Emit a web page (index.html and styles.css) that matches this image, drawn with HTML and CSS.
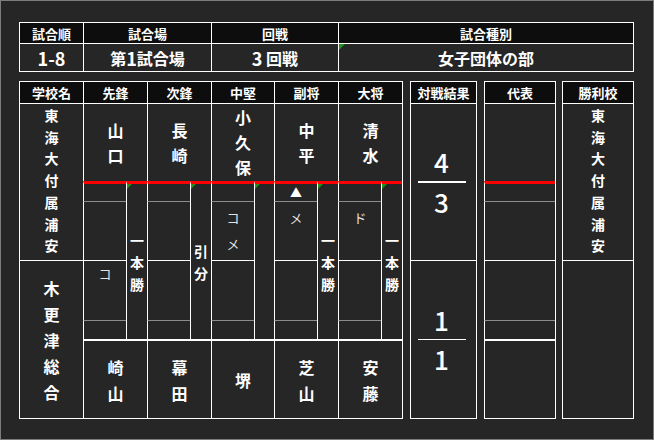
FILE: index.html
```html
<!DOCTYPE html>
<html lang="ja">
<head>
<meta charset="utf-8">
<title>試合結果</title>
<link rel="stylesheet" href="styles.css">
</head>
<body>
<div class="frame">
  <div class="info">
    <div class="cell hd">試合順</div>
    <div class="cell hd">試合場</div>
    <div class="cell hd">回戦</div>
    <div class="cell hd">試合種別</div>
    <div class="cell val"><span class="dg">1-8</span></div>
    <div class="cell val">第<span class="dg">1</span>試合場</div>
    <div class="cell val"><span class="dg">3</span>&nbsp;回戦</div>
    <div class="cell val flag">女子団体の部</div>
  </div>

  <div class="board">
    <div class="match">
      <div class="school-col">
        <div class="cell hd">学校名</div>
        <div class="cell school"><span class="vt">東海大付属浦安</span></div>
        <div class="cell school lower"><span class="vt">木更津総合</span></div>
      </div>

      <div class="bout">
        <div class="cell hd span">先鋒</div>
        <div class="cell name span"><span class="vt">山口</span></div>
        <div class="cell st-top"></div>
        <div class="cell strip"><span class="vt">一本勝</span></div>
        <div class="cell wz-top"></div>
        <div class="cell wz-bot"><span class="vt wz">コ</span></div>
        <div class="cell st-bot"></div>
        <div class="cell name2 span"><span class="vt">崎山</span></div>
      </div>

      <div class="bout">
        <div class="cell hd span">次鋒</div>
        <div class="cell name span"><span class="vt">長崎</span></div>
        <div class="cell st-top"></div>
        <div class="cell strip"><span class="vt">引分</span></div>
        <div class="cell wz-top"></div>
        <div class="cell wz-bot"></div>
        <div class="cell st-bot"></div>
        <div class="cell name2 span"><span class="vt">幕田</span></div>
      </div>

      <div class="bout narrow">
        <div class="cell hd span">中堅</div>
        <div class="cell name span"><span class="vt">小久保</span></div>
        <div class="cell st-top"></div>
        <div class="cell strip"></div>
        <div class="cell wz-top"><span class="vt wz">コメ</span></div>
        <div class="cell wz-bot"></div>
        <div class="cell st-bot"></div>
        <div class="cell name2 span"><span class="vt">堺</span></div>
      </div>

      <div class="bout">
        <div class="cell hd span">副将</div>
        <div class="cell name span"><span class="vt">中平</span></div>
        <div class="cell st-top"><span class="mark">▲</span></div>
        <div class="cell strip"><span class="vt">一本勝</span></div>
        <div class="cell wz-top"><span class="vt wz">メ</span></div>
        <div class="cell wz-bot"></div>
        <div class="cell st-bot"></div>
        <div class="cell name2 span"><span class="vt">芝山</span></div>
      </div>

      <div class="bout">
        <div class="cell hd span">大将</div>
        <div class="cell name span"><span class="vt">清水</span></div>
        <div class="cell st-top"></div>
        <div class="cell strip"><span class="vt">一本勝</span></div>
        <div class="cell wz-top"><span class="vt wz">ド</span></div>
        <div class="cell wz-bot"></div>
        <div class="cell st-bot"></div>
        <div class="cell name2 span"><span class="vt">安藤</span></div>
      </div>
    </div>

    <div class="score">
      <div class="cell hd">対戦結果</div>
      <div class="cell tally"><span class="num">4</span><span class="bar"></span><span class="num">3</span></div>
      <div class="cell tally"><span class="num">1</span><span class="bar thin"></span><span class="num">1</span></div>
    </div>

    <div class="rep">
      <div class="cell hd">代表</div>
      <div class="cell name"></div>
      <div class="cell st-top"></div>
      <div class="cell wz-top"></div>
      <div class="cell wz-bot"></div>
      <div class="cell st-bot"></div>
      <div class="cell name2"></div>
    </div>

    <div class="winner">
      <div class="cell hd">勝利校</div>
      <div class="cell school"><span class="vt">東海大付属浦安</span></div>
      <div class="cell school"></div>
    </div>
  </div>
</div>
</body>
</html>
```

FILE: styles.css
```css
* { box-sizing: border-box; }

html, body {
  margin: 0;
  padding: 0;
  background: #262626;
}

body {
  font-family: "Noto Sans CJK JP", "Noto Sans", sans-serif;
  color: #ffffff;
}

.frame {
  width: 654px;
  height: 440px;
  border: 1px solid #7c7c7c;
  background: #262626;
  padding: 21px 0 0 18px;
}

.cell {
  border-left: 1px solid #ffffff;
  border-top: 1px solid #ffffff;
  display: flex;
  align-items: center;
  justify-content: center;
  position: relative;
  min-width: 0;
  min-height: 0;
}

.hd {
  background: #0d0d0d;
  font-size: 13px;
  font-weight: 700;
  line-height: 1;
}

/* top info table */
.info {
  display: grid;
  width: 615px;
  grid-template-columns: 64px 128px 127px 295px;
  grid-template-rows: 21px 28px;
  border-right: 1px solid #ffffff;
  border-bottom: 1px solid #ffffff;
}

.val {
  font-size: 16px;
  font-weight: 700;
  line-height: 1;
}

.dg {
  font-size: 18px;
}

.flag::before,
.strip::before {
  content: "";
  position: absolute;
  top: 0;
  left: 0;
  width: 0;
  height: 0;
  border-top: 5px solid #1f8f1f;
  border-right: 5px solid transparent;
}

.flag::before {
  border-top-width: 6px;
  border-right-width: 6px;
}

/* board */
.board {
  display: flex;
  margin-top: 9px;
  height: 338px;
  align-items: flex-start;
}

.match {
  display: flex;
  border-right: 1px solid #ffffff;
  border-bottom: 1px solid #ffffff;
}

.school-col {
  width: 64px;
  display: grid;
  grid-template-rows: 22px 157px 158px;
}

.vt {
  display: block;
  width: 1em;
  text-align: center;
  word-break: break-all;
}

.school {
  font-size: 14px;
  font-weight: 700;
  line-height: 21.7px;
  padding-bottom: 2px;
}

.school.lower {
  font-size: 16px;
  line-height: 26px;
  padding-bottom: 0;
}

.bout {
  width: 64px;
  display: grid;
  grid-template-columns: 43px 21px;
  grid-template-rows: 22px 78px 20px 59px 60px 19px 79px;
}

.bout.narrow {
  width: 63px;
  grid-template-columns: 43px 20px;
}

.span { grid-column: 1 / -1; }

.name {
  font-size: 16px;
  font-weight: 700;
  line-height: 25px;
}

.name2 {
  border-top-width: 2px;
  font-size: 16px;
  font-weight: 700;
  line-height: 26px;
}

.st-top {
  border-top: 3px solid #ff0000;
}

.strip {
  grid-column: 2;
  grid-row: 3 / span 4;
  border-top: 3px solid #ff0000;
  font-size: 14px;
  font-weight: 700;
  line-height: 22px;
  padding-top: 1px;
}

.wz-top {
  border-top-color: #8c8c8c;
  align-items: flex-start;
  padding-top: 3px;
}

.wz-bot {
  align-items: flex-start;
}

.st-bot {
  border-top-color: #8c8c8c;
}

.wz {
  font-size: 13px;
  font-weight: 400;
  line-height: 26px;
  color: #e4e4e4;
}

.mark {
  font-size: 12px;
  line-height: 1;
}

/* results */
.score {
  width: 67px;
  margin-left: 7px;
  display: grid;
  grid-template-rows: 22px 157px 158px;
  border-right: 1px solid #ffffff;
  border-bottom: 1px solid #ffffff;
}

.tally {
  flex-direction: column;
  padding-right: 4px;
}

.num {
  font-size: 26px;
  font-weight: 500;
  line-height: 38px;
}

.bar {
  width: 48px;
  height: 2px;
  background: #ffffff;
}

.bar.thin { height: 1px; }

.rep {
  width: 72px;
  margin-left: 7px;
  display: grid;
  grid-template-rows: 22px 78px 20px 59px 60px 19px 79px;
  border-right: 1px solid #ffffff;
  border-bottom: 1px solid #ffffff;
}

.winner {
  width: 72px;
  margin-left: 6px;
  display: grid;
  grid-template-rows: 22px 157px 158px;
  border-right: 1px solid #ffffff;
  border-bottom: 1px solid #ffffff;
}
```
